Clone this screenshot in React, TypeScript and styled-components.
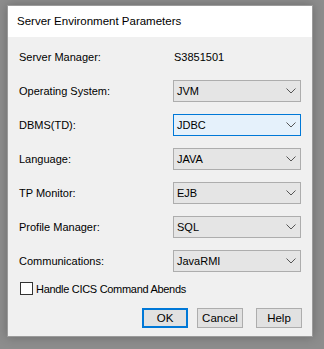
import styled, { createGlobalStyle } from "styled-components";

const GlobalStyle = createGlobalStyle`
  html, body {
    margin: 0;
    padding: 0;
    background: #8d8d8d;
  }
  body {
    font-family: "Liberation Sans", Arial, sans-serif;
    font-size: 11px;
    color: #000;
  }
`;

type Param = {
  label: string;
  value: string;
  focused?: boolean;
};

const params: Param[] = [
  { label: "Operating System:", value: "JVM" },
  { label: "DBMS(TD):", value: "JDBC", focused: true },
  { label: "Language:", value: "JAVA" },
  { label: "TP Monitor:", value: "EJB" },
  { label: "Profile Manager:", value: "SQL" },
  { label: "Communications:", value: "JavaRMI" },
];

function Chevron() {
  return (
    <svg width="10" height="6" viewBox="0 0 10 6">
      <polyline
        points="0.5,0.5 5,5 9.5,0.5"
        fill="none"
        stroke="#555"
        strokeWidth="1"
      />
    </svg>
  );
}

export default function App() {
  return (
    <>
      <GlobalStyle />
      <Screen>
        <Dialog>
          <TitleBar>Server Environment Parameters</TitleBar>
          <Body>
            <Form>
              <Label>Server Manager:</Label>
              <StaticValue>S3851501</StaticValue>
              {params.map((p) => (
                <Row key={p.label}>
                  <Label>{p.label}</Label>
                  <Select focused={p.focused}>
                    <span>{p.value}</span>
                    <Chevron />
                  </Select>
                </Row>
              ))}
            </Form>
            <CheckRow>
              <CheckBox />
              <CheckText>Handle CICS Command Abends</CheckText>
            </CheckRow>
            <Buttons>
              <Button primary>OK</Button>
              <Button>Cancel</Button>
              <Button>Help</Button>
            </Buttons>
          </Body>
        </Dialog>
      </Screen>
    </>
  );
}

const Screen = styled.div`
  width: 324px;
  height: 349px;
  padding: 5px 0 0 7px;
  box-sizing: border-box;
  overflow: hidden;
`;

const Dialog = styled.div`
  width: 306px;
  height: 332px;
  box-sizing: border-box;
  border: 1px solid #9b9b9b;
  background: #f0f0f0;
  display: flex;
  flex-direction: column;
  box-shadow: 0 0 10px rgba(0, 0, 0, 0.25);
`;

const TitleBar = styled.div`
  height: 31px;
  background: #fff;
  padding-left: 9px;
  display: flex;
  align-items: center;
  font-size: 11.5px;
  padding-bottom: 1px;
  box-sizing: border-box;
`;

const Body = styled.div`
  flex: 1;
  padding: 9px 0 0 11px;
  display: flex;
  flex-direction: column;
`;

const Form = styled.div`
  display: grid;
  grid-template-columns: 154px 128px;
  grid-auto-rows: 22px;
  row-gap: 12px;
  align-items: center;
`;

const Row = styled.div`
  display: contents;
`;

const Label = styled.span`
  white-space: nowrap;
`;

const StaticValue = styled.span`
  padding-left: 1px;
`;

const Select = styled.div<{ focused?: boolean }>`
  height: 22px;
  box-sizing: border-box;
  border: 1px solid ${(p) => (p.focused ? "#0078d7" : "#adadad")};
  background: ${(p) => (p.focused ? "#e5f1fb" : "#e5e5e5")};
  display: flex;
  align-items: center;
  justify-content: space-between;
  padding: 0 4px 0 3px;
`;

const CheckRow = styled.div`
  margin-top: 10px;
  margin-left: 1px;
  display: flex;
  align-items: center;
  gap: 3px;
  height: 13px;
`;

const CheckBox = styled.span`
  width: 13px;
  height: 13px;
  box-sizing: border-box;
  border: 1px solid #333;
  background: #fff;
`;

const CheckText = styled.span`
  letter-spacing: -0.3px;
`;

const Buttons = styled.div`
  margin-top: 13px;
  display: flex;
  justify-content: flex-end;
  gap: 9px;
  padding-right: 10px;
  & > :last-child {
    margin-left: 4px;
  }
`;

const Button = styled.button<{ primary?: boolean }>`
  width: 46px;
  height: 20px;
  box-sizing: border-box;
  font-family: inherit;
  font-size: 11.5px;
  padding: 0;
  background: #e1e1e1;
  border: ${(p) => (p.primary ? "2px solid #0078d7" : "1px solid #adadad")};
  color: #000;
`;
